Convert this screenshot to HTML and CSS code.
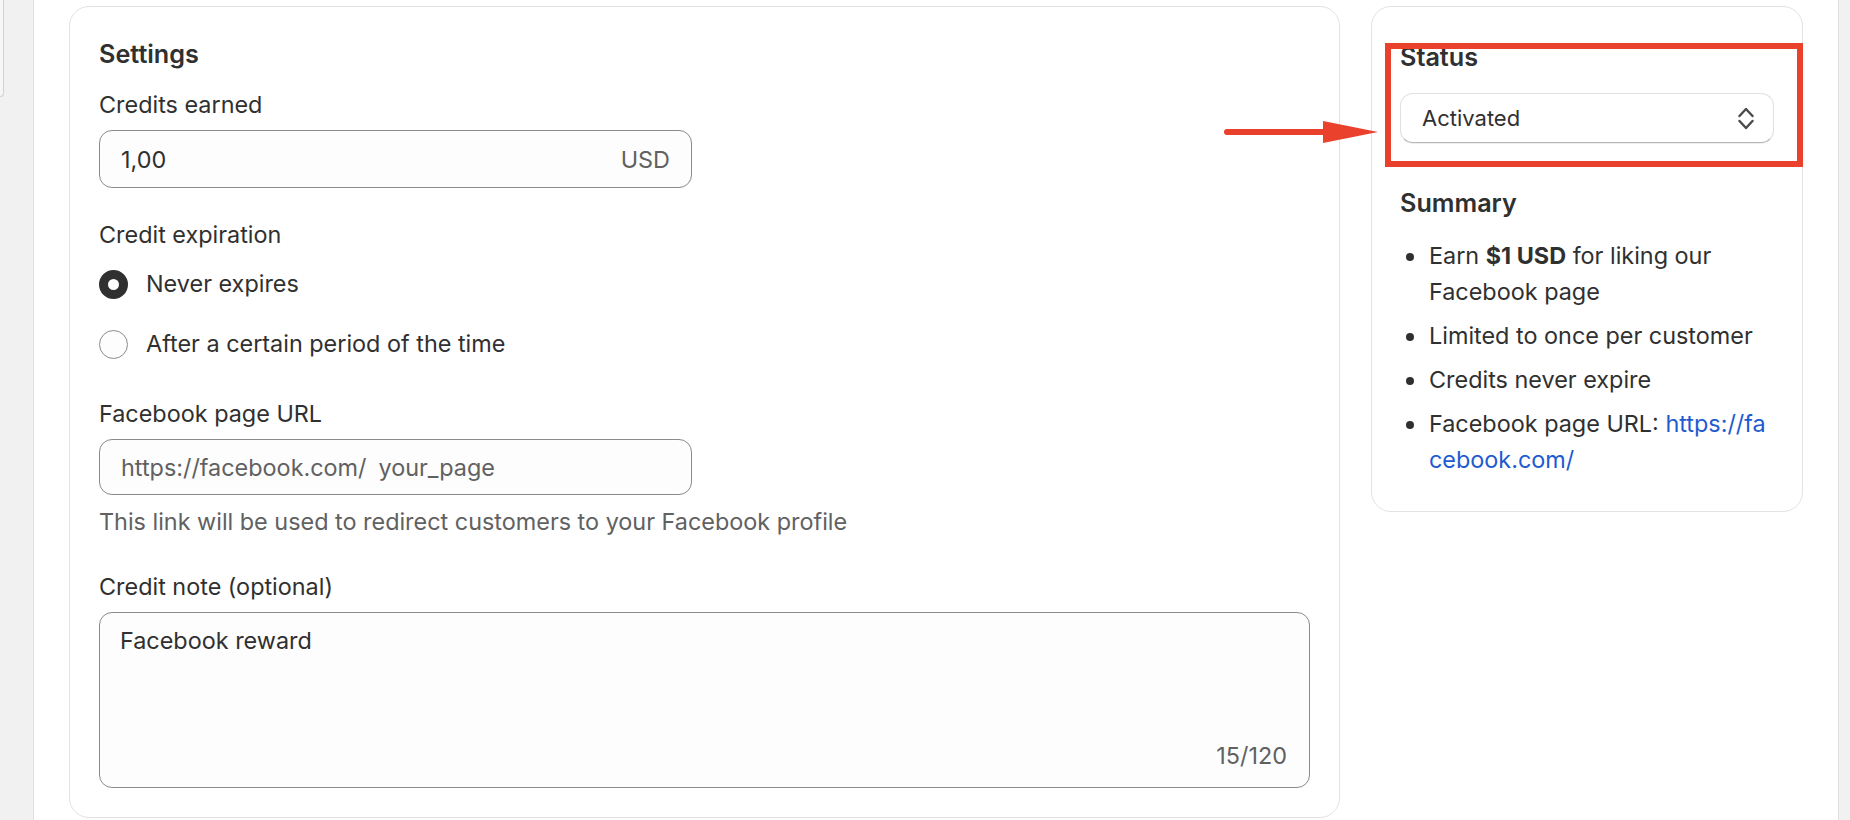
FILE: index.html
```html
<!DOCTYPE html>
<html lang="en">
<head>
<meta charset="utf-8">
<title>Facebook reward settings</title>
<link rel="stylesheet" href="styles.css">
</head>
<body>
<div class="app">
  <aside class="rail"><div class="rail-card"></div></aside>
  <main class="main">
    <div class="layout">
      <section class="card settings">
        <h2 class="card-title">Settings</h2>
        <div class="field field-first">
          <div class="label">Credits earned</div>
          <div class="input input-half"><span class="value">1,00</span><span class="suffix">USD</span></div>
        </div>
        <div class="field field-choices">
          <div class="label">Credit expiration</div>
          <div class="choices">
            <div class="choice"><span class="radio radio-checked"></span><span>Never expires</span></div>
            <div class="choice"><span class="radio"></span><span>After a certain period of the time</span></div>
          </div>
        </div>
        <div class="field">
          <div class="label">Facebook page URL</div>
          <div class="input input-half input-url"><span class="prefix">https://facebook.com/</span><span class="placeholder">your_page</span></div>
          <p class="help">This link will be used to redirect customers to your Facebook profile</p>
        </div>
        <div class="field">
          <div class="label">Credit note (optional)</div>
          <div class="textarea"><span class="value">Facebook reward</span><span class="count">15/120</span></div>
        </div>
      </section>
      <div class="aside">
        <section class="card status-card">
          <h2 class="card-title">Status</h2>
          <div class="select">
            <span class="select-value">Activated</span>
            <svg class="select-icon" width="16" height="24" viewBox="0 0 16 24" aria-hidden="true">
              <path d="M1.5 10 L8 3 L14.5 10" fill="none" stroke="#4a4a4a" stroke-width="2.4" stroke-linecap="round" stroke-linejoin="round"/>
              <path d="M1.5 15 L8 22 L14.5 15" fill="none" stroke="#4a4a4a" stroke-width="2.4" stroke-linecap="round" stroke-linejoin="round"/>
            </svg>
          </div>
          <h2 class="card-title summary-title">Summary</h2>
          <ul class="summary">
            <li>Earn <strong>$1 USD</strong> for liking our Facebook page</li>
            <li>Limited to once per customer</li>
            <li>Credits never expire</li>
            <li>Facebook page URL: <a class="link" href="#">https://facebook.com/</a></li>
          </ul>
        </section>
      </div>
    </div>
    <div class="annotation-box"></div>
    <svg class="annotation-arrow" width="160" height="34" viewBox="0 0 160 34" aria-hidden="true">
      <line x1="3" y1="17" x2="101" y2="17" stroke="#e9412b" stroke-width="6" stroke-linecap="round"/>
      <polygon points="99,6 154,17 99,28" fill="#e9412b"/>
    </svg>
  </main>
  <div class="rail-right"></div>
</div>
</body>
</html>
```

FILE: styles.css
```css
* {
  box-sizing: border-box;
}

html, body {
  margin: 0;
  padding: 0;
  height: 820px;
  overflow: hidden;
}

body {
  font-family: Inter, "Noto Sans", "Liberation Sans", sans-serif;
  font-size: 23.4px;
  line-height: 36px;
  color: #303030;
  background: #ffffff;
}

.app {
  display: flex;
  height: 820px;
}

.rail {
  width: 34px;
  flex: none;
  background: #f1f1f1;
  border-right: 1px solid #e1e1e1;
}

.rail-card {
  width: 4px;
  height: 97px;
  background: #f6f6f6;
  border-right: 1px solid #d2d2d2;
  border-bottom: 1px solid #d2d2d2;
  border-bottom-right-radius: 9px;
}

.main {
  position: relative;
  flex: 1;
  background: #ffffff;
  padding: 6px 35px 0 35px;
}

.rail-right {
  width: 12px;
  flex: none;
  background: #f1f1f1;
  border-left: 1px solid #e1e1e1;
}

.layout {
  display: grid;
  grid-template-columns: 1fr 432px;
  column-gap: 31px;
  align-items: start;
}

.card {
  background: #ffffff;
  border: 1px solid #e3e3e3;
  border-radius: 20px;
}

.settings {
  padding: 29px 29px 29px 29px;
}

.card-title {
  margin: 0;
  font-size: 25.2px;
  line-height: 36px;
  font-weight: 600;
  color: #303030;
}

.field + .field {
  margin-top: 29px;
}

.field-first {
  margin-top: 15px;
}

.field-choices {
  padding-bottom: 5px;
}

.label {
  margin-bottom: 7px;
}

.field-choices .label {
  margin-bottom: 13px;
}

.input {
  display: flex;
  align-items: center;
  justify-content: space-between;
  height: 58px;
  padding: 2px 21px 0 21px;
  background: #fdfdfd;
  border: 1px solid #8a8a8a;
  border-radius: 13px;
}

.input-half {
  width: 593px;
}

.input-url {
  height: 56px;
  justify-content: flex-start;
}

.suffix,
.prefix,
.placeholder {
  color: #616161;
}

.prefix {
  margin-right: 12px;
}

.choices {
  display: flex;
  flex-direction: column;
  row-gap: 24px;
}

.choice {
  display: flex;
  align-items: center;
  column-gap: 18px;
}

.radio {
  width: 29px;
  height: 29px;
  flex: none;
  border-radius: 50%;
  border: 1.3px solid #8a8a8a;
  background: #fdfdfd;
}

.radio-checked {
  border: 9.5px solid #303030;
  background: #ffffff;
}

.help {
  margin: 9px 0 0 0;
  color: #616161;
}

.textarea {
  display: flex;
  flex-direction: column;
  justify-content: space-between;
  height: 176px;
  padding: 10px 22px 13px 20px;
  background: #fdfdfd;
  border: 1px solid #8a8a8a;
  border-radius: 13px;
}

.count {
  align-self: flex-end;
  color: #616161;
}

.status-card {
  padding: 32px 28px 33px 28px;
}

.select {
  display: flex;
  align-items: center;
  justify-content: space-between;
  height: 50px;
  margin-top: 18px;
  padding: 0 19px 0 21px;
  background: #ffffff;
  border: 1px solid #e0e0e0;
  border-bottom-color: #b5b5b5;
  border-radius: 13px;
  box-shadow: 0 1px 0 rgba(0, 0, 0, 0.06);
  font-size: 22px;
}

.select-icon {
  display: block;
}

.summary-title {
  margin-top: 42px;
}

.summary {
  list-style: none;
  margin: 17px 0 0 0;
  padding: 0;
  display: flex;
  flex-direction: column;
  row-gap: 8px;
}

.summary li {
  position: relative;
  padding-left: 29px;
}

.summary li::before {
  content: "";
  position: absolute;
  left: 6px;
  top: 15px;
  width: 8px;
  height: 8px;
  border-radius: 50%;
  background: #303030;
}

.summary strong {
  font-weight: 700;
}

.link {
  color: #1f5bd0;
  text-decoration: none;
  word-break: break-all;
}

.annotation-box {
  position: absolute;
  left: 1351px;
  top: 43px;
  width: 418px;
  height: 124px;
  border: 6px solid #e9412b;
}

.annotation-arrow {
  position: absolute;
  left: 1190px;
  top: 115px;
}
```
